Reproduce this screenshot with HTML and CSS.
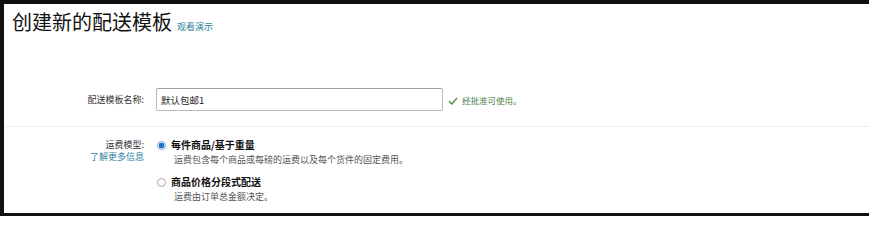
FILE: index.html
```html
<!DOCTYPE html>
<html lang="zh-CN">
<head>
<meta charset="utf-8">
<title>创建新的配送模板</title>
<link rel="stylesheet" href="styles.css">
</head>
<body>
<div class="frame">
  <header class="page-head">
    <h1 class="page-title">创建新的配送模板</h1>
    <a class="demo-link" href="#">观看演示</a>
  </header>

  <section class="form-section name-section">
    <div class="field-label">配送模板名称:</div>
    <div class="field-body inline">
      <input class="text-input" type="text" value="默认包邮1">
      <span class="valid-note">
        <svg class="check" viewBox="0 0 10 8" width="10" height="8"><path d="M1 4.2 L3.8 7 L9 1" fill="none" stroke="#4f8f4f" stroke-width="1.4"/></svg>
        经批准可使用。
      </span>
    </div>
  </section>

  <section class="form-section model-section">
    <div class="field-label stacked">
      <div>运费模型:</div>
      <a class="info-link" href="#">了解更多信息</a>
    </div>
    <div class="field-body options">
      <div class="option">
        <div class="option-title"><span class="radio checked"></span>每件商品/基于重量</div>
        <div class="option-desc">运费包含每个商品或每磅的运费以及每个货件的固定费用。</div>
      </div>
      <div class="option second">
        <div class="option-title"><span class="radio"></span>商品价格分段式配送</div>
        <div class="option-desc">运费由订单总金额决定。</div>
      </div>
    </div>
  </section>
</div>
</body>
</html>
```

FILE: styles.css
```css
html, body {
  margin: 0;
  padding: 0;
  background: #fff;
  overflow: hidden;
}
body {
  font-family: "Noto Sans CJK SC", "Noto Sans", "Liberation Sans", sans-serif;
  color: #333;
}
.frame {
  height: 216px;
  box-sizing: border-box;
  border-top: 4px solid #111;
  border-left: 4px solid #111;
  border-bottom: 3px solid #111;
  background: #fff;
  overflow: hidden;
}
.page-head {
  display: flex;
  align-items: baseline;
  gap: 5px;
  padding: 6px 0 0 8px;
  height: 24px;
}
.page-title {
  margin: 0;
  font-size: 20px;
  line-height: 24px;
  font-weight: normal;
  color: #111;
}
.demo-link {
  font-size: 9px;
  color: #2f8296;
  text-decoration: none;
}
.form-section {
  display: grid;
  grid-template-columns: 140px 1fr;
  column-gap: 12px;
}
.name-section {
  padding-top: 54px;
  padding-bottom: 15px;
  border-bottom: 1px solid #eeeeee;
  align-items: center;
}
.field-label {
  text-align: right;
  font-size: 9px;
  color: #333;
}
.field-body.inline {
  display: flex;
  align-items: center;
}
.text-input {
  box-sizing: border-box;
  width: 287px;
  height: 23px;
  margin: 0;
  padding: 0 4px;
  border: 1px solid #b9b9b9;
  border-top-color: #a0a0a0;
  border-radius: 2px;
  font-family: inherit;
  font-size: 9.5px;
  color: #222;
  outline: none;
}
.valid-note {
  display: flex;
  align-items: center;
  gap: 4px;
  margin-left: 5px;
  font-size: 8.5px;
  color: #4d7f4d;
}
.check {
  display: block;
  margin-top: 2px;
}
.model-section .field-label.stacked {
  padding-top: 12px;
  line-height: 12px;
}
.info-link {
  display: block;
  color: #2f7f9f;
  text-decoration: none;
  font-size: 9px;
}
.options {
  padding-top: 11px;
}
.option-title {
  display: flex;
  align-items: center;
  font-size: 10px;
  line-height: 14px;
  font-weight: bold;
  color: #111;
}
.radio {
  box-sizing: border-box;
  width: 9px;
  height: 9px;
  margin: 0 5px 0 1px;
  border-radius: 50%;
  border: 1px solid #a8a8a8;
  background: #fff;
  flex: none;
}
.radio.checked {
  border-color: #7ea9d6;
  background: radial-gradient(circle, #1f6fd0 0 2.6px, #dbe8f6 3px);
}
.option-desc {
  padding-left: 18px;
  margin-top: 1px;
  font-size: 9px;
  line-height: 14px;
  color: #555;
}
.option.second {
  margin-top: 8px;
}
```
